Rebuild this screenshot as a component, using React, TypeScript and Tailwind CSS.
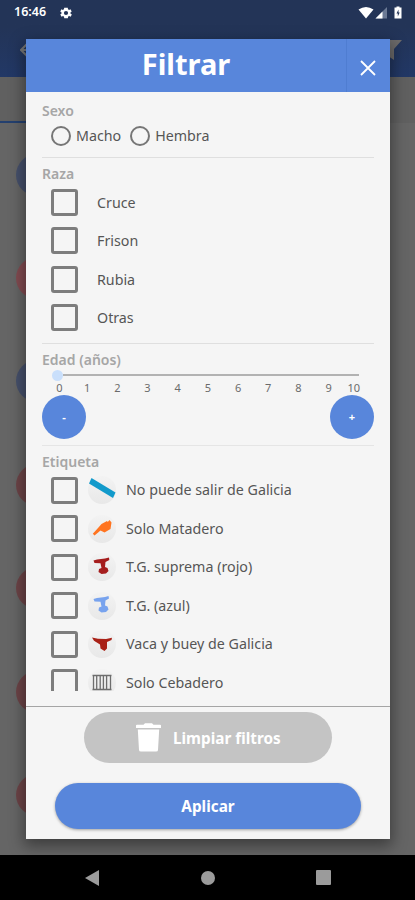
import React, { useState } from "react";
import clsx from "clsx";

/* ---------------- TYPES ---------------- */

type Tag = {
  name: string;
  icon: React.ReactNode;
};

/* ---------------- CONFIG ---------------- */

const breeds = ["Cruce", "Frison", "Rubia", "Otras"];

const listItems = ["blue", "red", "blue", "red", "red", "red", "red"];

const ageMarks = [1, 2, 3, 4, 5, 6, 7, 8, 9];

const tags: Tag[] = [
  {
    name: "No puede salir de Galicia",
    icon: <path d="M3.5 2 L27.500 16.500 L25 22 L1 7.500 Z" fill="#129acb" />,
  },
  {
    name: "Solo Matadero",
    icon: (
      <path
        d="M13.500 9 L19 6 L19.800 7 L21.500 5 L23.500 7.500 L22.500 14 L16.500 17.500 L12.500 15.500 L6.500 20.500 L4.800 18.800 L10 13 Z"
        fill="#ff7420"
      />
    ),
  },
  {
    name: "T.G. suprema (rojo)",
    icon: (
      <path
        d="M5.500 7.500 L9 6.500 L17 5.500 L21 4.500 L21.300 7 L17.500 9 L17 14 L19.500 15 L20.500 18 L18 20.500 L13.500 21 L10.500 19 L11 16 L13.500 15 L12.500 10.200 L6.500 10 Z"
        fill="#a51d1d"
      />
    ),
  },
  {
    name: "T.G. (azul)",
    icon: (
      <path
        d="M5.500 7 L9 6 L17 5 L20.500 4 L21 6.500 L17.500 8.500 L17 13.500 L19.500 14.500 L20.500 17.500 L18 20 L13.500 20.500 L10.500 18.500 L11 15.500 L13.500 14.500 L12.500 9.700 L6.500 9.500 Z"
        fill="#78a3ee"
      />
    ),
  },
  {
    name: "Vaca y buey de Galicia",
    icon: (
      <path
        d="M4 7.500 L10 8.800 L18 9 L24 7.800 L23.500 10 L19 12 L19 18.500 L16.500 21 L12.500 18.500 L12 14.500 L6 10.800 Z"
        fill="#a92117"
      />
    ),
  },
  {
    name: "Solo Cebadero",
    icon: (
      <path
        d="M4.500 6.500H23.500M4.500 20.500H23.500M5.500 6V21M8.700 6V21M12.200 6V21M15.400 6V21M18.600 6V21M22.500 6V21"
        stroke="#6d6d6d"
        strokeWidth="1.300"
        fill="none"
      />
    ),
  },
];

/* ---------------- SMALL PARTS ---------------- */

const SectionTitle = ({ children }: { children: React.ReactNode }) => (
  <h2 className="h-[19px] text-[14px] font-semibold leading-5 text-[#a6a6a6]">
    {children}
  </h2>
);

const CheckBox = ({
  checked,
  onClick,
  label,
}: {
  checked: boolean;
  onClick: () => void;
  label: string;
}) => (
  <button
    role="checkbox"
    aria-checked={checked}
    aria-label={label}
    onClick={onClick}
    className={clsx(
      "size-[27px] shrink-0 rounded-[3px] border-3 border-[#7d7d7d]",
      checked && "bg-[#5886db]",
    )}
  />
);

const StatusBar = () => (
  <div className="flex h-[25px] items-center pl-[14px] pr-[10px] text-white">
    <span className="w-[46px] text-[12.500px] font-semibold">16:46</span>
    <svg width="12" height="12" viewBox="2 2 20 20" fill="currentColor">
      <path d="M19.4 13a7.5 7.5 0 0 0 0-2l2.1-1.6-2-3.5-2.5 1a7.3 7.3 0 0 0-1.7-1L15 3.200h-6l-.4 2.700a7.300 7.300 0 0 0-1.700 1l-2.500-1-2 3.500L4.600 11a7.500 7.500 0 0 0 0 2l-2.100 1.600 2 3.500 2.500-1a7.300 7.300 0 0 0 1.700 1l.4 2.700h6l.4-2.700a7.300 7.300 0 0 0 1.700-1l2.500 1 2-3.500zM12 15.500a3.500 3.500 0 1 1 0-7 3.500 3.500 0 0 1 0 7z" />
    </svg>
    <svg className="ml-auto" width="47" height="14" viewBox="0 0 47 14">
      <path d="M0.500 3.500Q8-1.500 15.500 3.500L8 12.500Z" fill="#fff" />
      <path d="M29 1V12.500H17.500Z" fill="#6b7994" />
      <path d="M24.500 5.500V12.500H17.500Z" fill="#fff" />
      <path d="M36.500 1.500h2V0.500h3v1h2V12.500h-7Z" fill="#fff" />
      <path d="M40.500 3.500L38.500 7.500H39.800V10.500L41.700 6.500H40.500Z" fill="#233457" />
    </svg>
  </div>
);

/* ---------------- COMPONENT ---------------- */

const App: React.FC = () => {
  const [sex, setSex] = useState("");
  const [age, setAge] = useState(0);
  const [selected, setSelected] = useState<Record<string, boolean>>({});

  const toggle = (key: string) => {
    setSelected((prev) => ({ ...prev, [key]: !prev[key] }));
  };

  const clear = () => {
    setSex("");
    setAge(0);
    setSelected({});
  };

  return (
    <div className="relative flex h-[900px] w-[415px] flex-col overflow-hidden bg-[#656565] font-['Noto_Sans',sans-serif]">
      {/* Dimmed page behind the dialog */}

      <header className="h-[77px] shrink-0 bg-linear-to-b from-[#233457] from-35% to-[#223866]">
        <StatusBar />
        <div className="flex h-[50px] items-center justify-between pl-5 pr-[13px]">
          <svg width="14" height="14" viewBox="0 0 14 14" fill="none">
            <path d="M7 1L1 7L7 13M1 7H14" stroke="#777" strokeWidth="2" />
          </svg>
          <svg width="22" height="20" viewBox="0 0 22 20">
            <path d="M0 0H22L14 9V20L8 16V9Z" fill="#6d6b6b" />
          </svg>
        </div>
      </header>
      <div className="h-[46px] shrink-0 bg-[#606060]">
        <div className="h-full w-1/2 border-b-2 border-[#24406f]" />
      </div>
      <ul className="flex-1 overflow-hidden bg-[#656565]">
        {listItems.map((color, i) => (
          <li key={i} className="flex h-[103.400px] items-center pl-4">
            <span
              className={clsx(
                "size-[42px] rounded-full",
                color === "blue" ? "bg-[#46506b]" : i === 1 ? "bg-[#824b51]" : "bg-[#6c4447]",
              )}
            />
          </li>
        ))}
      </ul>

      {/* Dialog */}

      <div className="absolute left-[26px] top-[39px] flex h-[800px] w-[364px] flex-col bg-[#f5f5f5] shadow-[0_5px_14px_2px_rgba(0,0,0,0.4)]">
        <div className="flex h-[53px] shrink-0 bg-[#5886db] text-white">
          <h1 className="flex-1 text-center text-[29px] font-bold leading-[50px]">
            Filtrar
          </h1>
          <button
            aria-label="Cerrar"
            className="flex w-11 items-center justify-center border-l border-[#4f7dd1] pr-0.5 pt-1"
          >
            <svg width="16" height="16" viewBox="0 0 16 16">
              <path d="M1 1L15 15M15 1L1 15" stroke="#fff" strokeWidth="1.800" />
            </svg>
          </button>
        </div>

        <div className="h-[599px] shrink-0 overflow-hidden px-4 text-[14.250px] text-[#565656]">
          <section className="h-[66px] border-b border-[#dfdfdf] pt-[9px]">
            <SectionTitle>Sexo</SectionTitle>
            <div className="flex h-[32px] items-center gap-[9px] pl-[9px]">
              {["Macho", "Hembra"].map((name) => (
                <button
                  key={name}
                  onClick={() => setSex(name)}
                  className="flex items-center gap-[5px]"
                >
                  <span
                    className={clsx(
                      "size-5 rounded-full border-2 border-[#767676]",
                      sex === name && "bg-[#5886db]",
                    )}
                  />
                  {name}
                </button>
              ))}
            </div>
          </section>

          <section className="h-[186px] border-b border-[#dfdfdf] pt-[6px]">
            <SectionTitle>Raza</SectionTitle>
            {breeds.map((name) => (
              <div key={name} className="flex h-[38.500px] items-center gap-[19px] pl-[9px]">
                <CheckBox
                  label={name}
                  checked={!!selected[name]}
                  onClick={() => toggle(name)}
                />
                {name}
              </div>
            ))}
          </section>

          <section className="h-[102px] border-b border-[#e5e5e5] pt-[6px]">
            <SectionTitle>Edad (años)</SectionTitle>
            <div className="ml-[10px] flex h-3 w-[307px] items-center">
              <span style={{ width: `${age * 9.7}%` }} className="h-0.5 bg-[#5886db]" />
              <span className="size-[11px] rounded-full bg-[#c9dffb]" />
              <span className="h-[2.500px] flex-1 bg-[#b2b2b2]" />
            </div>
            <div className="ml-[5px] flex h-[14px] text-center text-[11px] leading-[14px] text-[#6b6b6b]">
              <span className="w-[25px]">0</span>
              {ageMarks.map((n) => (
                <span key={n} className="w-[30.200px]">
                  {n}
                </span>
              ))}
              <span className="w-[20px]">10</span>
            </div>
            <div className="flex justify-between text-[11px] font-bold text-white">
              <button
                onClick={() => setAge(Math.max(0, age - 1))}
                className="size-[44px] rounded-full bg-[#5886db]"
              >
                -
              </button>
              <button
                onClick={() => setAge(Math.min(10, age + 1))}
                className="size-[44px] rounded-full bg-[#5886db]"
              >
                +
              </button>
            </div>
          </section>

          <section className="pt-[6px] leading-4">
            <SectionTitle>Etiqueta</SectionTitle>
            {tags.map((tag) => (
              <div key={tag.name} className="flex h-[38.500px] items-center pl-[9px]">
                <CheckBox
                  label={tag.name}
                  checked={!!selected[tag.name]}
                  onClick={() => toggle(tag.name)}
                />
                <span className="ml-2.5 mr-2.5 size-7 shrink-0 rounded-full bg-linear-to-b from-[#f3f3f3] to-[#e8e8e8]">
                  <svg width="28" height="28" viewBox="0 0 28 28">
                    {tag.icon}
                  </svg>
                </span>
                {tag.name}
              </div>
            ))}
          </section>
        </div>

        <footer className="mt-[15px] flex flex-1 flex-col items-center border-t border-[#a5a5a5] pt-[5px] text-[15.300px] font-bold text-white">
          <button
            onClick={clear}
            className="flex h-[51px] w-[248px] items-center rounded-full bg-[#c4c4c4] pl-[52px]"
          >
            <svg width="25" height="29" viewBox="0 0 25 29" fill="#fff">
              <path d="M0 2.500Q0 1.800 1 1.800H7.500L9 0.300H16L17.500 1.800H24Q25 1.800 25 2.500V5H0Z" />
              <path d="M1.800 6.500H23.200L22 27Q22 28.500 20 28.500H5Q3 28.500 3 27Z" />
            </svg>
            <span className="ml-3 pt-0.5">Limpiar filtros</span>
          </button>
          <button className="mt-5 h-[46px] w-[306px] rounded-full bg-[#5886db] shadow-[0_1px_3px_rgba(0,0,0,0.35)]">
            Aplicar
          </button>
        </footer>
      </div>

      {/* Android navigation bar */}

      <nav className="relative flex h-[45px] shrink-0 items-center justify-between bg-black pl-[85px] pr-[84px]">
        <svg width="14" height="16" viewBox="0 0 14 16" fill="#9b9b9b">
          <path d="M14 0V16L0 8Z" />
        </svg>
        <span className="size-[14px] rounded-full bg-[#9b9b9b]" />
        <span className="size-[15px] rounded-[1px] bg-[#9b9b9b]" />
      </nav>
    </div>
  );
};

export default App;
